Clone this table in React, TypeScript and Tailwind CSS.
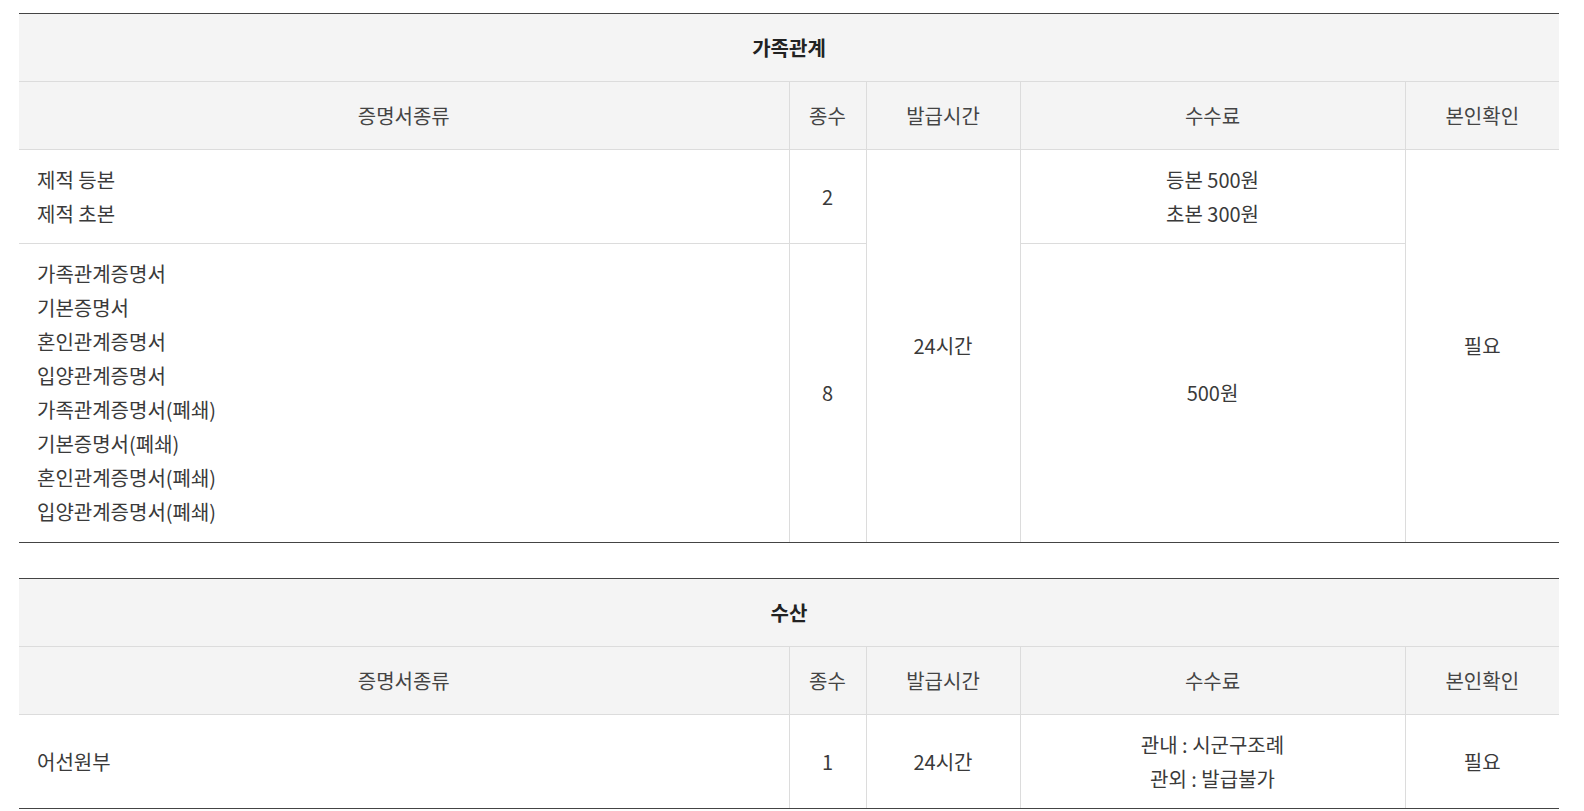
import React from "react";

const font = { fontFamily: '"Noto Sans CJK KR", "Noto Sans", sans-serif' };

function Head({ title }: { title: string }) {
  return (
    <>
      <colgroup>
        <col className="w-[770px]" />
        <col className="w-[77px]" />
        <col className="w-[154px]" />
        <col className="w-[385px]" />
        <col className="w-[154px]" />
      </colgroup>
      <thead>
        <tr className="h-[68px] bg-[#f4f4f4]">
          <th colSpan={5} className="border-t border-t-[#444] border-b border-b-[#dcdcdc] text-[20px] font-bold text-[#222] text-center">
            {title}
          </th>
        </tr>
        <tr className="h-[68px] bg-[#f4f4f4] text-[20px] font-normal text-[#444]">
          <th className="border border-[#dcdcdc] border-l-0 font-normal">증명서종류</th>
          <th className="border border-[#dcdcdc] font-normal">종수</th>
          <th className="border border-[#dcdcdc] font-normal">발급시간</th>
          <th className="border border-[#dcdcdc] font-normal">수수료</th>
          <th className="border border-[#dcdcdc] border-r-0 font-normal">본인확인</th>
        </tr>
      </thead>
    </>
  );
}

const td = "border border-[#dcdcdc] text-center";

export default function App() {
  return (
    <div className="bg-white w-[1584px] h-[811px] pt-[13px] pl-[19px]" style={font}>
      <table className="table-fixed border-collapse w-[1540px] text-[20px] leading-[34px] text-[#3a3a3a]">
        <Head title="가족관계" />
        <tbody>
          <tr className="h-[94px]">
            <td className="border border-[#dcdcdc] border-l-0 pl-[18px] py-[12px] text-left">
              <div>제적 등본</div>
              <div>제적 초본</div>
            </td>
            <td className={td}>2</td>
            <td className={td + " border-b-[#444]"} rowSpan={2}>24시간</td>
            <td className={td}>
              <div>등본 500원</div>
              <div>초본 300원</div>
            </td>
            <td className={td + " border-r-0 border-b-[#444]"} rowSpan={2}>필요</td>
          </tr>
          <tr>
            <td className="border border-[#dcdcdc] border-l-0 border-b-[#444] pl-[18px] py-[13px] text-left">
              <div>가족관계증명서</div>
              <div>기본증명서</div>
              <div>혼인관계증명서</div>
              <div>입양관계증명서</div>
              <div>가족관계증명서(폐쇄)</div>
              <div>기본증명서(폐쇄)</div>
              <div>혼인관계증명서(폐쇄)</div>
              <div>입양관계증명서(폐쇄)</div>
            </td>
            <td className={td + " border-b-[#444]"}>8</td>
            <td className={td + " border-b-[#444]"}>500원</td>
          </tr>
        </tbody>
      </table>

      <table className="mt-[35px] table-fixed border-collapse w-[1540px] text-[20px] leading-[34px] text-[#3a3a3a]">
        <Head title="수산" />
        <tbody>
          <tr className="h-[94px]">
            <td className="border border-[#dcdcdc] border-l-0 border-b-[#444] pl-[18px] text-left">어선원부</td>
            <td className={td + " border-b-[#444]"}>1</td>
            <td className={td + " border-b-[#444]"}>24시간</td>
            <td className={td + " border-b-[#444]"}>
              <div>관내 : 시군구조례</div>
              <div>관외 : 발급불가</div>
            </td>
            <td className={td + " border-r-0 border-b-[#444]"}>필요</td>
          </tr>
        </tbody>
      </table>
    </div>
  );
}
